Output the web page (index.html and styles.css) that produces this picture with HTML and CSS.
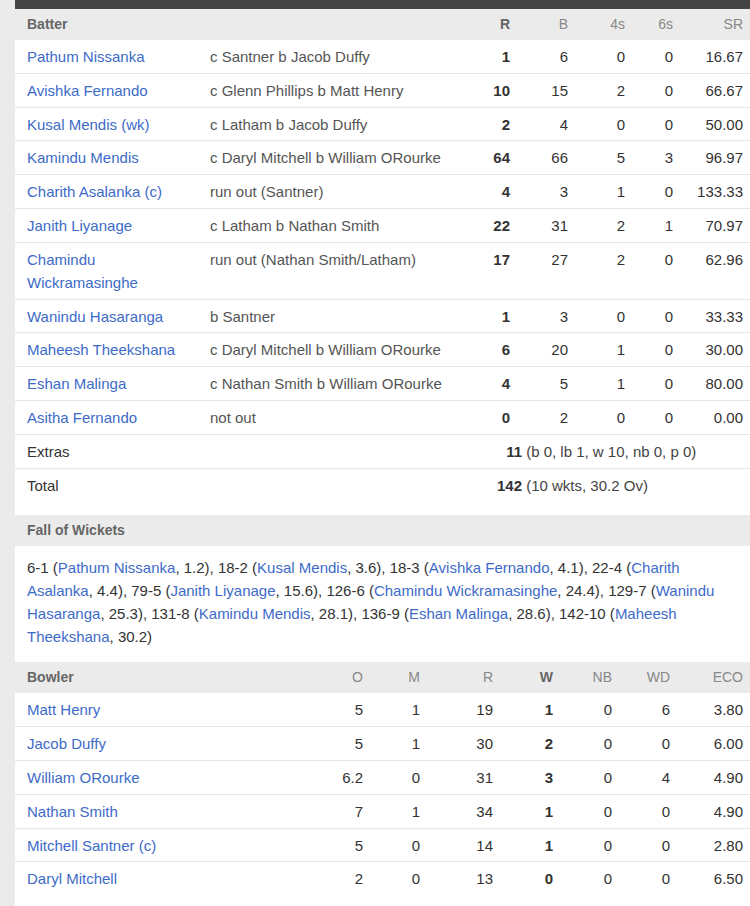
FILE: index.html
```html
<!DOCTYPE html>
<html>
<head>
<meta charset="utf-8">
<link rel="stylesheet" href="styles.css">
</head>
<body>
<div class="page">
  <div class="topbar"></div>

  <div class="table bat">
    <div class="row head">
      <div class="c name hb">Batter</div><div class="c"></div>
      <div class="c num hb">R</div><div class="c num">B</div><div class="c num">4s</div><div class="c num">6s</div><div class="c num">SR</div>
    </div>
    <div class="row"><a class="c name">Pathum Nissanka</a><div class="c dis">c Santner b Jacob Duffy</div><div class="c num b">1</div><div class="c num">6</div><div class="c num">0</div><div class="c num">0</div><div class="c num">16.67</div></div>
    <div class="row"><a class="c name">Avishka Fernando</a><div class="c dis">c Glenn Phillips b Matt Henry</div><div class="c num b">10</div><div class="c num">15</div><div class="c num">2</div><div class="c num">0</div><div class="c num">66.67</div></div>
    <div class="row"><a class="c name">Kusal Mendis (wk)</a><div class="c dis">c Latham b Jacob Duffy</div><div class="c num b">2</div><div class="c num">4</div><div class="c num">0</div><div class="c num">0</div><div class="c num">50.00</div></div>
    <div class="row"><a class="c name">Kamindu Mendis</a><div class="c dis">c Daryl Mitchell b William ORourke</div><div class="c num b">64</div><div class="c num">66</div><div class="c num">5</div><div class="c num">3</div><div class="c num">96.97</div></div>
    <div class="row"><a class="c name">Charith Asalanka (c)</a><div class="c dis">run out (Santner)</div><div class="c num b">4</div><div class="c num">3</div><div class="c num">1</div><div class="c num">0</div><div class="c num">133.33</div></div>
    <div class="row"><a class="c name">Janith Liyanage</a><div class="c dis">c Latham b Nathan Smith</div><div class="c num b">22</div><div class="c num">31</div><div class="c num">2</div><div class="c num">1</div><div class="c num">70.97</div></div>
    <div class="row"><a class="c name">Chamindu Wickramasinghe</a><div class="c dis">run out (Nathan Smith/Latham)</div><div class="c num b">17</div><div class="c num">27</div><div class="c num">2</div><div class="c num">0</div><div class="c num">62.96</div></div>
    <div class="row"><a class="c name">Wanindu Hasaranga</a><div class="c dis">b Santner</div><div class="c num b">1</div><div class="c num">3</div><div class="c num">0</div><div class="c num">0</div><div class="c num">33.33</div></div>
    <div class="row"><a class="c name">Maheesh Theekshana</a><div class="c dis">c Daryl Mitchell b William ORourke</div><div class="c num b">6</div><div class="c num">20</div><div class="c num">1</div><div class="c num">0</div><div class="c num">30.00</div></div>
    <div class="row"><a class="c name">Eshan Malinga</a><div class="c dis">c Nathan Smith b William ORourke</div><div class="c num b">4</div><div class="c num">5</div><div class="c num">1</div><div class="c num">0</div><div class="c num">80.00</div></div>
    <div class="row"><a class="c name">Asitha Fernando</a><div class="c dis">not out</div><div class="c num b">0</div><div class="c num">2</div><div class="c num">0</div><div class="c num">0</div><div class="c num">0.00</div></div>
    <div class="row"><div class="c label">Extras</div><div class="c summary"><span class="sumval">11</span> (b 0, lb 1, w 10, nb 0, p 0)</div></div>
    <div class="row last"><div class="c label">Total</div><div class="c summary"><span class="sumval">142</span> (10 wkts, 30.2 Ov)</div></div>
  </div>

  <div class="section-head">Fall of Wickets</div>
  <p class="fow">6-1 (<a>Pathum Nissanka</a>, 1.2), 18-2 (<a>Kusal Mendis</a>, 3.6), 18-3 (<a>Avishka Fernando</a>, 4.1), 22-4 (<a>Charith Asalanka</a>, 4.4), 79-5 (<a>Janith Liyanage</a>, 15.6), 126-6 (<a>Chamindu Wickramasinghe</a>, 24.4), 129-7 (<a>Wanindu Hasaranga</a>, 25.3), 131-8 (<a>Kamindu Mendis</a>, 28.1), 136-9 (<a>Eshan Malinga</a>, 28.6), 142-10 (<a>Maheesh Theekshana</a>, 30.2)</p>

  <div class="table bowl">
    <div class="row head">
      <div class="c name hb">Bowler</div>
      <div class="c num">O</div><div class="c num">M</div><div class="c num">R</div><div class="c num hb">W</div><div class="c num">NB</div><div class="c num">WD</div><div class="c num">ECO</div>
    </div>
    <div class="row"><a class="c name">Matt Henry</a><div class="c num">5</div><div class="c num">1</div><div class="c num">19</div><div class="c num b">1</div><div class="c num">0</div><div class="c num">6</div><div class="c num">3.80</div></div>
    <div class="row"><a class="c name">Jacob Duffy</a><div class="c num">5</div><div class="c num">1</div><div class="c num">30</div><div class="c num b">2</div><div class="c num">0</div><div class="c num">0</div><div class="c num">6.00</div></div>
    <div class="row"><a class="c name">William ORourke</a><div class="c num">6.2</div><div class="c num">0</div><div class="c num">31</div><div class="c num b">3</div><div class="c num">0</div><div class="c num">4</div><div class="c num">4.90</div></div>
    <div class="row"><a class="c name">Nathan Smith</a><div class="c num">7</div><div class="c num">1</div><div class="c num">34</div><div class="c num b">1</div><div class="c num">0</div><div class="c num">0</div><div class="c num">4.90</div></div>
    <div class="row"><a class="c name">Mitchell Santner (c)</a><div class="c num">5</div><div class="c num">0</div><div class="c num">14</div><div class="c num b">1</div><div class="c num">0</div><div class="c num">0</div><div class="c num">2.80</div></div>
    <div class="row last"><a class="c name">Daryl Mitchell</a><div class="c num">2</div><div class="c num">0</div><div class="c num">13</div><div class="c num b">0</div><div class="c num">0</div><div class="c num">0</div><div class="c num">6.50</div></div>
  </div>
</div>
</body>
</html>
```

FILE: styles.css
```css
* { box-sizing: border-box; }
html, body {
  margin: 0;
  padding: 0;
  background: #ebebeb;
  font-family: "Liberation Sans", Arial, sans-serif;
  font-size: 15px;
  color: #333;
}
.page {
  margin-left: 15px;
  width: 735px;
  min-height: 906px;
  background: #fff;
}
.topbar {
  height: 9px;
  background: #444;
}
.table .row {
  display: grid;
  padding: 5px 7px 4.8px 12px;
  line-height: 23px;
  border-bottom: 1px solid #e6e6e6;
  align-items: start;
}
.bat .row {
  grid-template-columns: 183px 260px 40px 58px 57px 48px 70px;
}
.bowl .row {
  grid-template-columns: 273px 63px 57px 73px 60px 59px 58px 73px;
}
.table .row.head {
  background: #ebebeb;
  border-bottom: none;
  padding-top: 4px;
  padding-bottom: 4px;
  color: #888;
  font-size: 14px;
}
.table .row.last { border-bottom: none; }
.hb { font-weight: bold; color: #666; }
.c { display: block; }
.name { color: #3d6bc8; padding-right: 10px; text-decoration: none; }
.head .name { color: #666; }
.dis { color: #555; }
.num { text-align: right; }
.b { font-weight: bold; color: #333; }
.label { color: #333; }
.summary {
  grid-column: 2 / -1;
  color: #444;
}
.sumval {
  display: inline-block;
  width: 312px;
  text-align: right;
  font-weight: bold;
  color: #333;
}
.section-head {
  margin-top: 14px;
  background: #ebebeb;
  padding: 4px 12px;
  line-height: 23px;
  font-size: 14px;
  font-weight: bold;
  color: #666;
}
.fow {
  margin: 0;
  padding: 10px 7px 14px 12px;
  line-height: 23px;
  color: #333;
}
.fow a { color: #3d6bc8; }
```
